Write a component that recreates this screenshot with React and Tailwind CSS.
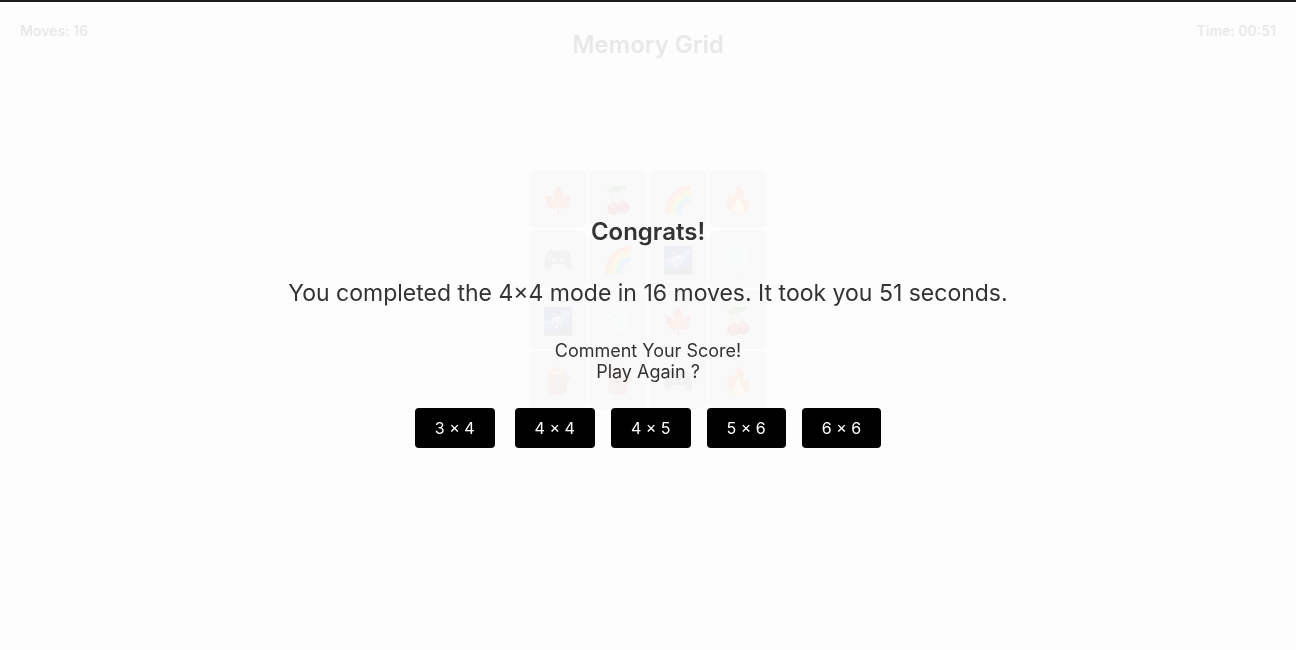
import React from 'react';

const cards = ['🍁', '🍒', '🌈', '🔥', '🎮', '🌈', '🌌', '🌪️', '🌌', '🌪️', '🍁', '🍒', '🪵', '🪵', '🎮', '🔥'];
const modes = ['3 × 4', '4 × 4', '4 × 5', '5 × 6', '6 × 6'];

const App = () => {
  return (
    <div className="relative h-[650px] overflow-hidden bg-white font-['Inter',sans-serif] text-[#2e2e2e]">
      {/* Game board */}
      <div className="h-full pt-[2px]">
        <div className="flex justify-between px-5 pt-5 text-sm font-semibold leading-[18px]">
          <span>Moves: 16</span>
          <span>Time: 00:51</span>
        </div>
        <h1 className="-mt-[11px] text-center text-2xl font-semibold">Memory Grid</h1>
        <div className="mx-auto mt-[108px] grid w-[240px] grid-cols-4 gap-[2px] px-[1px]">
          {cards.map((card, i) => (
            <div key={i} className="flex h-[58.5px] items-center justify-center rounded-lg bg-[#d8d8d8] pt-[2px] text-[26px]">
              <span className="opacity-60">{card}</span>
            </div>
          ))}
        </div>
      </div>

      {/* Win overlay */}
      <div className="absolute inset-x-0 top-0 bottom-0 flex flex-col items-center border-t-2 border-[#1c1c1c] bg-[#fdfdfd]/[0.9] pt-[215px] text-[#333333] will-change-transform">
        <h2 className="text-2xl font-semibold leading-[30px]">Congrats!</h2>
        <p className="mt-[31px] text-[23px] leading-[30px]">You completed the 4×4 mode in 16 moves. It took you 51 seconds.</p>
        <p className="mt-[32px] text-lg leading-[21px]">Comment Your Score!</p>
        <p className="text-lg leading-[21px]">Play Again ?</p>
        <div className="mt-[26px] flex gap-4">
          {modes.map((mode, i) => (
            <button key={mode} className={`h-10 rounded bg-black px-5 text-base text-white ${i === 0 ? 'mr-1' : ''}`}>
              {mode}
            </button>
          ))}
        </div>
      </div>
    </div>
  );
};

export default App;
